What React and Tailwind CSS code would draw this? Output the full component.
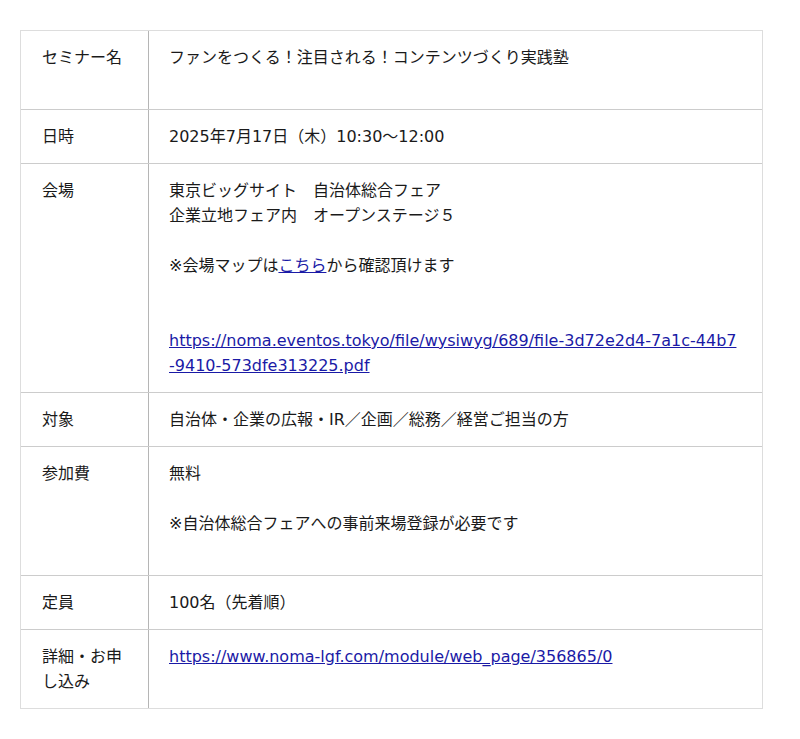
import React from 'react';

const rows = [
  {
    label: 'セミナー名',
    body: (
      <>
        ファンをつくる！注目される！コンテンツづくり実践塾
        <br />
        <br />
      </>
    ),
  },
  { label: '日時', body: '2025年7月17日（木）10:30〜12:00' },
  {
    label: '会場',
    body: (
      <>
        東京ビッグサイト　自治体総合フェア
        <br />
        企業立地フェア内　オープンステージ５
        <br />
        <br />
        ※会場マップは
        <a href="#" className="text-[#1a1aa6] underline">
          こちら
        </a>
        から確認頂けます
        <br />
        <br />
        <br />
        <a href="#" className="text-[#1a1aa6] underline break-all">
          https://noma.eventos.tokyo/file/wysiwyg/689/file-3d72e2d4-7a1c-44b7-9410-573dfe313225.pdf
        </a>
      </>
    ),
  },
  { label: '対象', body: '自治体・企業の広報・IR／企画／総務／経営ご担当の方' },
  {
    label: '参加費',
    body: (
      <>
        無料
        <br />
        <br />
        ※自治体総合フェアへの事前来場登録が必要です
        <br />
        <br />
      </>
    ),
  },
  { label: '定員', body: '100名（先着順）' },
  {
    label: '詳細・お申し込み',
    body: (
      <a href="#" className="text-[#1a1aa6] underline break-all">
        https://www.noma-lgf.com/module/web_page/356865/0
      </a>
    ),
  },
];

export default function App() {
  return (
    <div
      className="min-h-[739px] bg-white pt-[30px] pl-[20px] text-[16px] leading-[25px] text-[#1a1a1a]"
      style={{ fontFamily: '"DejaVu Sans", "Noto Sans CJK JP", sans-serif' }}
    >
      <div className="w-[743px] border border-[#dddddd]">
        {rows.map((row, i) => (
          <div
            key={row.label}
            className={`flex ${i > 0 ? 'border-t border-[#cccccc]' : ''}`}
          >
            <div className="w-[128px] shrink-0 border-r border-[#b5b5b5] px-[21px] py-[14px]">
              {row.label}
            </div>
            <div className="flex-1 min-w-0 px-[20px] py-[14px]">{row.body}</div>
          </div>
        ))}
      </div>
    </div>
  );
}
